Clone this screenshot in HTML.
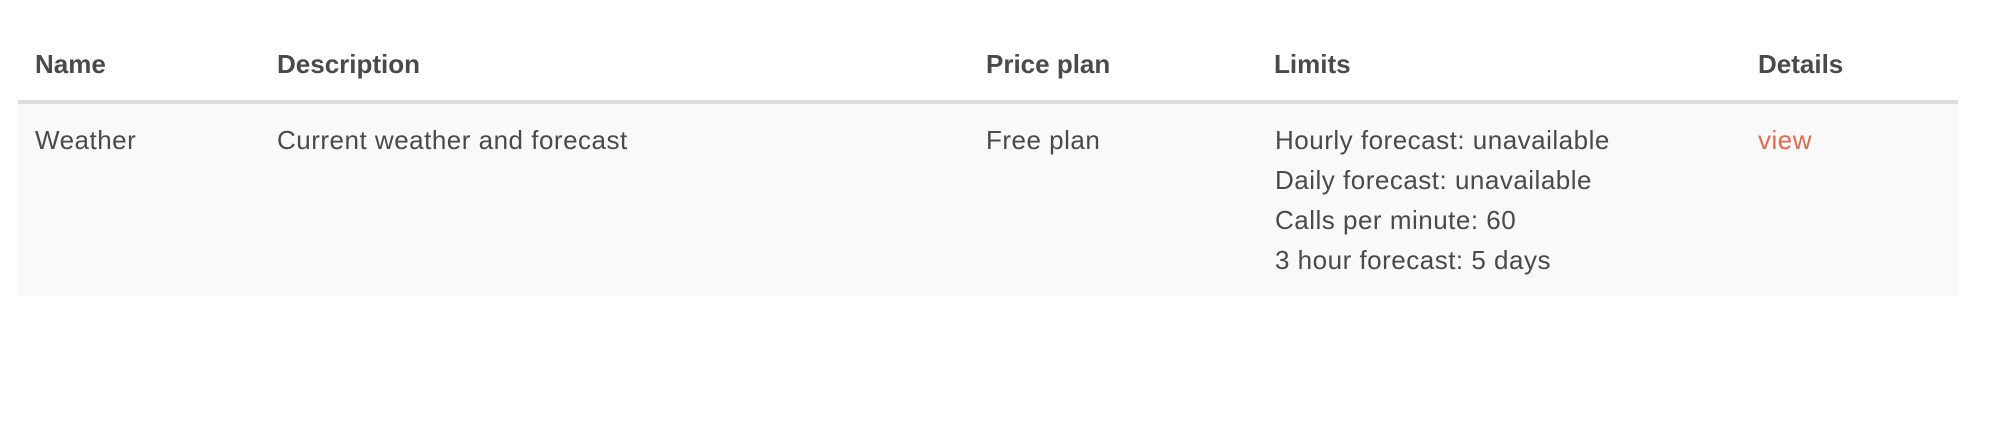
<!DOCTYPE html>
<html><head><meta charset="utf-8"><style>
html,body{margin:0;padding:0;background:#fff;width:2016px;height:444px;overflow:hidden}
body{font-family:"Liberation Sans",Arial,sans-serif;color:#4a4a4a;font-size:26px;letter-spacing:0.5px}
.row{position:absolute;left:18px;top:104px;width:1940px;height:192px;background:#f9f9f9}
.line{position:absolute;left:18px;top:100px;width:1940px;height:4px;background:#dedede}
.t{position:absolute;line-height:40px;white-space:nowrap}
.h{font-weight:bold;top:44px;letter-spacing:0}
.b{top:120px}
a{color:#e2694d;text-decoration:none}
</style></head><body>
<div class="row"></div><div class="line"></div>
<div class="t h" style="left:35px">Name</div>
<div class="t h" style="left:277px">Description</div>
<div class="t h" style="left:986px">Price plan</div>
<div class="t h" style="left:1274px">Limits</div>
<div class="t h" style="left:1758px">Details</div>
<div class="t b" style="left:35px">Weather</div>
<div class="t b" style="left:277px">Current weather and forecast</div>
<div class="t b" style="left:986px">Free plan</div>
<div class="t b" style="left:1275px">Hourly forecast: unavailable<br>Daily forecast: unavailable<br>Calls per minute: 60<br>3 hour forecast: 5 days</div>
<div class="t b" style="left:1758px"><a>view</a></div>
</body></html>
